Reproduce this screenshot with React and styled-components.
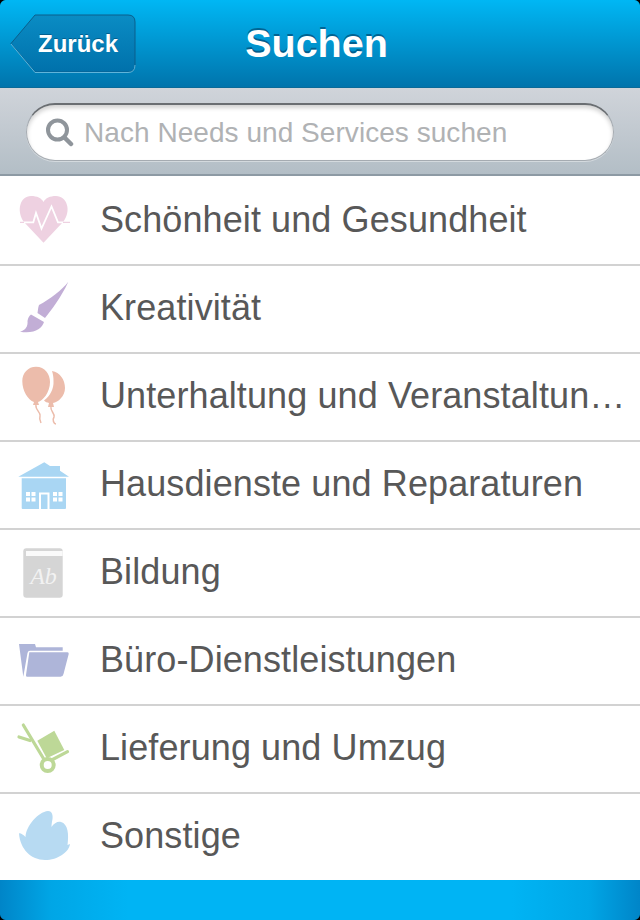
import React from 'react'
import styled, { createGlobalStyle } from 'styled-components'

const GlobalStyle = createGlobalStyle`
    html, body {
        margin: 0;
        padding: 0;
        background: #fff;
    }
    * {
        box-sizing: border-box;
    }
`

// every icon is drawn in the 88x84 slot at the left of a row
const Icon = ({ children }) => (
    <svg width="88" height="84" viewBox="0 0 88 84">{children}</svg>
)

const HeartIcon = () => (
    <Icon>
        <path fill="#eed1e1" d="M43.500 64.700 L24 44 C16 33 20 18 31 18 C37 18 41.500 20 43.500 24 C45.500 20 50 18 56 18 C67 18 72 33 63 44 Z" />
        <path fill="none" stroke="#fff" strokeWidth="1.800" d="M24 44.300 H33.300 L36 35 L41.500 50.500 L51.500 28.500 L58 44.300 H63" />
        <path fill="none" stroke="#eed1e1" strokeWidth="1.200" d="M20 44.300 H24 M63 44.300 H70" />
    </Icon>
)

const BrushIcon = () => (
    <Icon>
        <path fill="#c2aed6" d="M68.300 15.700 C62 24 50 33 39 39 C38 42 38 44 37.500 47 L45 52 C50 46 62 30 68.300 15.700 Z" />
        <path fill="#c2aed6" d="M31 48.500 L44 56 C42 63 34 68 20 65.700 C26 64 28 60 27.500 55 C28 52 29 50 31 48.500 Z" />
    </Icon>
)

const BalloonIcon = () => (
    <Icon>
        <path fill="#ecbcab" d="M52 17 C60 18 65 26 65 34 C65 42 58 48.500 53 49 L54 53 L48 53 L49 49 C47 48.500 45.500 48 44 46.500 C50 42 54 35 53.500 27 C53.500 23 53 20 52 17 Z" />
        <path fill="#ecbcab" d="M36 12.700 C45 12.700 50 20 50 28 C50 38 43 47 38 48 L39 51 L33 51 L34 48 C28 46 22.300 37 22.300 27 C22.300 19 28 12.700 36 12.700 Z" />
        <path fill="none" stroke="#ecbcab" strokeWidth="1.500" d="M36 51 C35 56 41 58 40 62 C39 65 40 67 41 69 M51 53 C50 57 55 59 54 63 C52 66 54 70 56 70" />
    </Icon>
)

const HouseIcon = () => (
    <Icon>
        <path fill="#a9d6f3" d="M18.300 34.700 L44.300 20.300 L50 24 L60 24 L60 28.700 L69 34.700 Z" />
        <path fill="#a9d6f3" d="M21.700 36.300 H66 V66 Q66 67 65 67 H22.700 Q21.700 67 21.700 66 Z" />
        <path fill="none" stroke="#fff" strokeWidth="2" d="M40 67 V51.500 H48.500 V67" />
        <g fill="#fff">
            <rect x="26" y="50" width="4" height="4" />
            <rect x="31.500" y="50" width="4" height="4" />
            <rect x="26" y="55.500" width="4" height="4" />
            <rect x="31.500" y="55.500" width="4" height="4" />
            <rect x="53" y="50" width="4" height="4" />
            <rect x="58.500" y="50" width="4" height="4" />
            <rect x="53" y="55.500" width="4" height="4" />
            <rect x="58.500" y="55.500" width="4" height="4" />
        </g>
    </Icon>
)

const BookIcon = () => (
    <Icon>
        <rect x="23.300" y="18.300" width="39.400" height="49.400" rx="3" fill="#d5d5d5" />
        <rect x="26" y="21" width="36.700" height="5" fill="#fafafa" />
        <text x="43.500" y="54" textAnchor="middle" fontFamily="'Liberation Serif', serif" fontStyle="italic" fontSize="24" fill="#f2f2f2">Ab</text>
    </Icon>
)

const FolderIcon = () => (
    <Icon>
        <path fill="#aeb5d9" d="M19 26 H35 L36 29.300 H62.700 V32.700 H30 Q28 32.700 27.500 35 L23.300 58.700 Z" />
        <path fill="#aeb5d9" d="M29.300 34.300 H67.500 Q69 34.300 68.700 36 L63.500 56 Q63 58.700 60.500 58.700 H27 Q25.700 58.700 26 57 Z" />
    </Icon>
)

const TrolleyIcon = () => (
    <Icon>
        <g fill="none" stroke="#bdd897" strokeLinecap="round">
            <path strokeWidth="3.200" d="M23.300 19 L43.300 52.300" />
            <path strokeWidth="3.200" d="M19 31 L30 34.500" />
            <path strokeWidth="3.200" d="M51.700 54 L67.500 45.700" />
            <circle cx="47.700" cy="59" r="6" strokeWidth="4" />
        </g>
        <path fill="#bdd897" d="M37.300 34.700 L54.300 24.700 L64.300 44 L46.700 52.300 Z" />
    </Icon>
)

const LeafIcon = () => (
    <Icon>
        <path fill="#b7daf2" d="M19 39.300 C21 39 23.500 41 25.500 43 C26 32 38 18 48 17 C52.500 17 53 22 52.500 25 C52 28 51.500 30 51.500 33 C54 29 58 27 61 28 C68 30 69 40 67.500 51 L70 50 C69 58 58 66 45 66 C31 66 20 55 19 39.300 Z" />
    </Icon>
)

const SearchIcon = () => (
    <svg width="29" height="29" viewBox="0 0 29 29">
        <circle cx="12.500" cy="12" r="9.500" fill="none" stroke="#8f959b" strokeWidth="4" />
        <path d="M19.500 19.500 L26 26" stroke="#8f959b" strokeWidth="4.500" strokeLinecap="round" />
    </svg>
)

const categories = [
    { label: 'Schönheit und Gesundheit', icon: <HeartIcon /> },
    { label: 'Kreativität', icon: <BrushIcon /> },
    { label: 'Unterhaltung und Veranstaltun…', icon: <BalloonIcon /> },
    { label: 'Hausdienste und Reparaturen', icon: <HouseIcon /> },
    { label: 'Bildung', icon: <BookIcon /> },
    { label: 'Büro-Dienstleistungen', icon: <FolderIcon /> },
    { label: 'Lieferung und Umzug', icon: <TrolleyIcon /> },
    { label: 'Sonstige', icon: <LeafIcon /> },
]

function App() {
    return (
        <Screen>
            <GlobalStyle />
            <NavBar>
                <BackButton>
                    <BackShape viewBox="0 0 126 60" width="126" height="60">
                        <defs>
                            <linearGradient id="backFill" x1="0" y1="0" x2="0" y2="1">
                                <stop offset="0" stopColor="#0a8cc4" />
                                <stop offset="1" stopColor="#0071ab" />
                            </linearGradient>
                        </defs>
                        <path
                            d="M1 29.500 L25 1 H118 Q125 1 125 8 V51 Q125 58 118 58 H25 Z"
                            fill="url(#backFill)"
                            stroke="#0a5f8c"
                            strokeWidth="1"
                        />
                        <path d="M1 30 L25 58.500 H118 Q125 58.500 125 51" fill="none" stroke="#5fb4da" strokeWidth="1" />
                    </BackShape>
                    <BackLabel>Zurück</BackLabel>
                </BackButton>
                <Title>Suchen</Title>
            </NavBar>
            <SearchBar>
                <SearchField>
                    <SearchIcon />
                    <Placeholder>Nach Needs und Services suchen</Placeholder>
                </SearchField>
            </SearchBar>
            <List>
                {categories.map(item => (
                    <Row key={item.label}>
                        <IconSlot>{item.icon}</IconSlot>
                        <RowLabel>{item.label}</RowLabel>
                    </Row>
                ))}
            </List>
            <Footer />
        </Screen>
    )
}

const Screen = styled.div`
    position: relative;
    width: 640px;
    height: 920px;
    display: flex;
    flex-direction: column;
    overflow: hidden;
    background: #fff;
    font-family: 'Liberation Sans', Arial, sans-serif;

    &::before, &::after {
        content: '';
        position: absolute;
        top: 0;
        width: 6px;
        height: 6px;
        z-index: 2;
    }
    &::before {
        left: 0;
        background: radial-gradient(circle at 6px 6px, transparent 5.500px, #000 6.500px);
    }
    &::after {
        right: 0;
        background: radial-gradient(circle at 0 6px, transparent 5.500px, #000 6.500px);
    }
`

const NavBar = styled.header`
    height: 88px;
    flex: none;
    display: grid;
    grid-template-columns: 126px 1fr;
    align-items: center;
    padding: 0 0 0 10px;
    background: linear-gradient(#00b7f4, #0074ac);
    border-bottom: 1px solid #0a6a98;
`

const BackButton = styled.div`
    position: relative;
    width: 126px;
    height: 60px;
    margin-top: 1px;
    display: flex;
    align-items: center;
    justify-content: flex-end;
    padding-right: 18px;
`

const BackShape = styled.svg`
    position: absolute;
    left: 0;
    top: 0;
`

const BackLabel = styled.span`
    position: relative;
    margin-top: -1px;
    color: #fff;
    font-size: 24px;
    font-weight: 700;
    text-shadow: 0 -1px 0 rgba(0, 60, 100, 0.5);
`

const Title = styled.h1`
    margin: 0;
    padding-right: 143px;
    text-align: center;
    color: #fff;
    font-size: 39.500px;
    font-weight: 700;
    line-height: 1;
    text-shadow: 0 -2px 0 rgba(0, 60, 100, 0.6);
`

const SearchBar = styled.div`
    height: 88px;
    flex: none;
    padding: 15px 26px 15px;
    background: linear-gradient(#d0d4da, #b3bec6);
    border-bottom: 2px solid #8d9aa4;
`

const SearchField = styled.div`
    height: 58px;
    display: flex;
    align-items: center;
    gap: 10px;
    padding: 0 0 0 18px;
    border-radius: 29px;
    background: #fff;
    border: 1px solid #a5abb1;
    border-top: 2px solid #6a6e72;
    box-shadow: inset 0 3px 4px rgba(0, 0, 0, 0.18), 0 1px 0 rgba(255, 255, 255, 0.4);
`

const Placeholder = styled.span`
    color: #b0b2b4;
    font-size: 28px;
    letter-spacing: 0.05px;
`

const List = styled.main`
    flex: 1;
    display: flex;
    flex-direction: column;
    padding-top: 2px;
`

const Row = styled.div`
    height: 88px;
    flex: none;
    display: flex;
    align-items: center;
    padding-bottom: 2px;
    border-bottom: 2px solid #d2d2d2;

    &:last-child {
        height: 86px;
        border-bottom: 0;
    }
`

const IconSlot = styled.div`
    width: 88px;
    height: 84px;
    flex: none;
`

const RowLabel = styled.span`
    min-width: 0;
    flex: 1;
    padding-left: 12px;
    color: #585858;
    font-size: 36px;
    letter-spacing: 0.1px;
    white-space: nowrap;
`

const Footer = styled.footer`
    position: relative;
    height: 40px;
    flex: none;
    background: linear-gradient(90deg, #0085c8, #00a6e6 8%, #00b4f4 20%, #00b4f4 80%, #00a6e6 92%, #0085c8);

    &::before, &::after {
        content: '';
        position: absolute;
        bottom: 0;
        width: 6px;
        height: 6px;
    }
    &::before {
        left: 0;
        background: radial-gradient(circle at 6px 0, transparent 5.500px, #000 6.500px);
    }
    &::after {
        right: 0;
        background: radial-gradient(circle at 0 0, transparent 5.500px, #000 6.500px);
    }
`

export default App
